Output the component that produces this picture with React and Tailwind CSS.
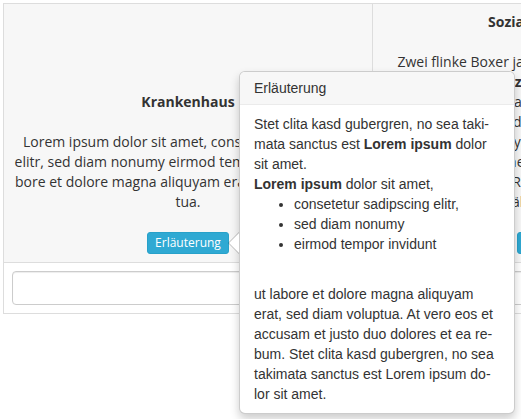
import React from 'react'

const leftLines = [
  'Lorem ipsum dolor sit amet, consetetur sadipscing',
  'elitr, sed diam nonumy eirmod tempor invidunt ut la-',
  'bore et dolore magna aliquyam erat, sed diam volup-',
  'tua.',
]

function InfoButton() {
  return (
    <button
      type="button"
      className="mt-5 h-[22px] px-[7px] rounded-[3px] border border-[#28a1c9] bg-[#2fa9d3] text-white text-[12px] leading-[18px]"
    >
      Erläuterung
    </button>
  )
}

function Popover() {
  return (
    <div className="absolute left-[239px] top-[71px] w-[276px] bg-white border border-black/20 rounded-md shadow-[0_5px_10px_rgba(0,0,0,0.2)] font-['Liberation_Sans',Arial,sans-serif] text-[14px] text-[#333]">
      {/* arrow pointing at the button */}
      <div className="absolute left-[-12px] top-[160px] w-0 h-0 border-y-[11px] border-y-transparent border-r-[11px] border-r-black/25" />
      <div className="absolute left-[-11px] top-[161px] w-0 h-0 border-y-[10px] border-y-transparent border-r-[10px] border-r-white" />
      <div className="px-[14px] py-2 leading-4 bg-[#f7f7f7] border-b border-[#ebebeb] rounded-t-[5px]">
        Erläuterung
      </div>
      <div className="px-[14px] py-[9px] leading-5">
        <p>
          Stet clita kasd gubergren, no sea taki{'\u00AD'}mata sanctus est <b>Lorem ipsum</b> dolor sit amet.
          <br />
          <b>Lorem ipsum</b> dolor sit amet,
        </p>
        <ul className="list-disc pl-10 mb-[10px]">
          <li>consetetur sadipscing elitr,</li>
          <li>sed diam nonumy</li>
          <li>eirmod tempor invidunt</li>
        </ul>
        <div className="h-5" />
        <p>
          ut labore et dolore magna aliquyam erat, sed diam voluptua. At vero eos et accusam et justo duo dolores et ea re{'\u00AD'}bum. Stet clita kasd gubergren, no sea takimata sanctus est Lorem ipsum do{'\u00AD'}lor sit amet.
        </p>
      </div>
    </div>
  )
}

export default function App() {
  return (
    <div className="relative w-[521px] h-[419px] overflow-hidden bg-white">
      <div className="p-[3px] font-['Open_Sans',sans-serif] text-[14px] leading-5 text-[#333]">
        <div className="w-[740px] border border-[#ddd]">
          <div className="flex bg-[#f7f7f7] border-b border-[#ddd]">
            <div className="w-[369px] shrink-0 p-2 border-r border-[#ddd] flex flex-col justify-end items-center text-center">
              <div className="font-bold mb-5">Krankenhaus</div>
              <div>
                {leftLines.map((l) => (
                  <div key={l} className="whitespace-nowrap">{l}</div>
                ))}
              </div>
              <InfoButton />
            </div>
            <div className="flex-1 min-w-0 p-2 flex flex-col justify-end items-center text-center">
              <div className="font-bold mb-5">Sozialeinrichtungen</div>
              <div>
                <div className="whitespace-nowrap">Zwei flinke Boxer jagen die quirlige Eva und ihren</div>
                <div className="whitespace-nowrap">Mops durch Sylt. <b>Franz jagt im komplett verwahr</b>losten</div>
                <div className="whitespace-nowrap">Taxi quer durch Bayern. Zwölf Boxkämpfer jagen</div>
                <div className="whitespace-nowrap">Viktor quer über den großen Sylter Deich. Vogel</div>
                <div className="whitespace-nowrap">Quax zwickt Johnys Pferd Bim. Sylvia wagt quick</div>
                <div className="whitespace-nowrap">den Jux bei Pforzheim. Polyfon zwitschernd aßen</div>
                <div className="whitespace-nowrap">Mäxchens Vögel Rüben, Joghurt und Quark. Fix,</div>
                <div className="whitespace-nowrap">Schwyz! quäkt Jürgen blöd vom Paß.</div>
              </div>
              <InfoButton />
            </div>
          </div>
          <div className="p-2">
            <input
              type="text"
              className="block w-full h-[34px] px-3 border border-[#ccc] rounded bg-white shadow-[inset_0_1px_1px_rgba(0,0,0,0.075)]"
            />
          </div>
        </div>
      </div>
      <Popover />
    </div>
  )
}
